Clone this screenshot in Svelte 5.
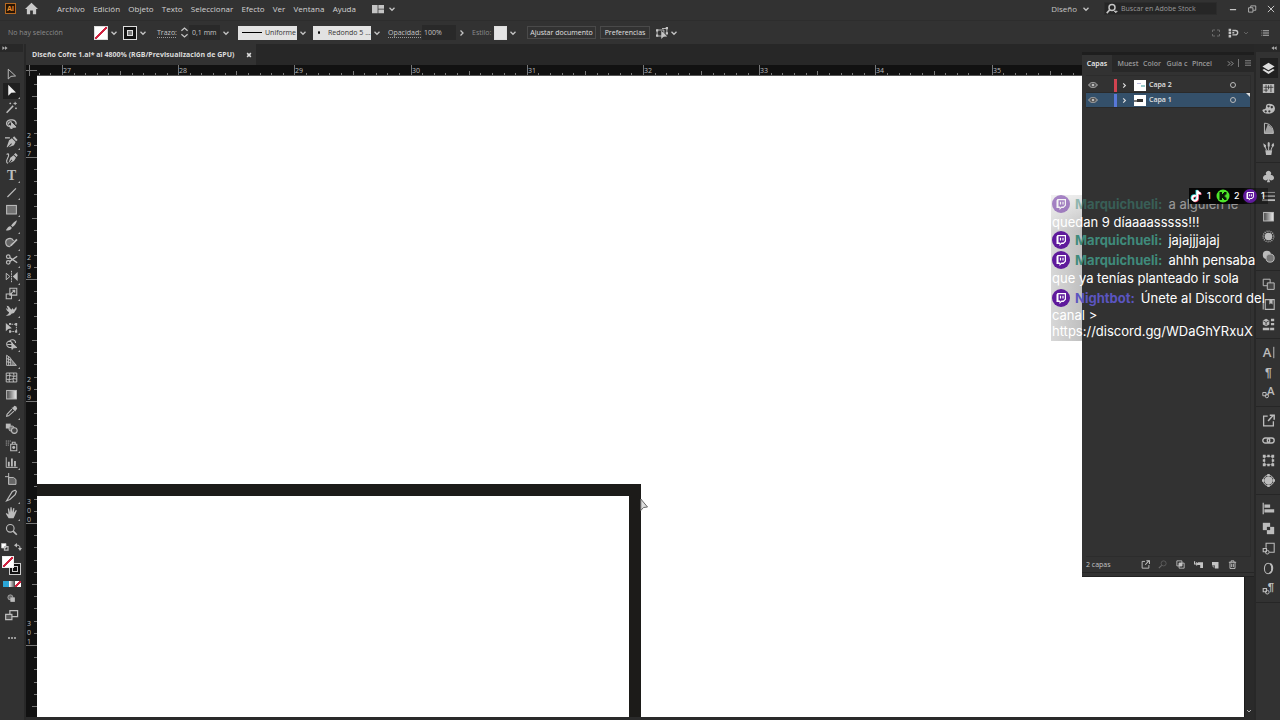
<script lang="ts">
  type Tool = { id: string; label: string; more?: boolean };
  type Layer = { name: string; color: string; thumb: string };
  type Message = { user: string; color: string; lines: string[]; old?: boolean };

  const menus = ["Archivo", "Edición", "Objeto", "Texto", "Seleccionar", "Efecto", "Ver", "Ventana", "Ayuda"];

  const tools: Tool[] = [
    { id: "select", label: "Selección" },
    { id: "direct", label: "Selección directa", more: true },
    { id: "wand", label: "Varita mágica" },
    { id: "lasso", label: "Lazo" },
    { id: "pen", label: "Pluma", more: true },
    { id: "curve", label: "Curvatura" },
    { id: "type", label: "Texto", more: true },
    { id: "line", label: "Segmento de línea", more: true },
    { id: "rect", label: "Rectángulo", more: true },
    { id: "brush", label: "Pincel", more: true },
    { id: "shaper", label: "Shaper", more: true },
    { id: "scissors", label: "Tijeras", more: true },
    { id: "reflect", label: "Reflejo", more: true },
    { id: "scale", label: "Escala", more: true },
    { id: "warp", label: "Deformar", more: true },
    { id: "free", label: "Transformación libre", more: true },
    { id: "builder", label: "Creador de formas", more: true },
    { id: "persp", label: "Cuadrícula de perspectiva", more: true },
    { id: "mesh", label: "Malla" },
    { id: "gradient", label: "Degradado" },
    { id: "dropper", label: "Cuentagotas", more: true },
    { id: "blend", label: "Fusión" },
    { id: "spray", label: "Rociar símbolos", more: true },
    { id: "graph", label: "Gráfica de columnas", more: true },
    { id: "artboard", label: "Mesa de trabajo" },
    { id: "slice", label: "Sector", more: true },
    { id: "hand", label: "Mano", more: true },
    { id: "zoom", label: "Zoom" },
  ];

  const dock = [
    ["layers", "swatches", "palette", "guide", "brushes"],
    ["club", "lines", "gradient", "sun", "transp"],
    ["boards", "library", "assets"],
    ["char", "para", "glyphs"],
    ["export", "link", "transform", "globe"],
    ["align", "pathfinder", "gstyle", "opentype", "pstyle"],
  ];

  const panelTabs = ["Capas", "Muest", "Color", "Guía c", "Pincel"];

  const layers: Layer[] = [
    { name: "Capa 2", color: "#d04350", thumb: "thumb2" },
    { name: "Capa 1", color: "#5878d8", thumb: "thumb1" },
  ];

  const messages: Message[] = [
    { user: "Marquichueli:", color: "#3f8a7b", lines: ["a alguien le", "quedan 9 díaaaasssss!!!"], old: true },
    { user: "Marquichueli:", color: "#3f8a7b", lines: ["jajajjjajaj"] },
    { user: "Marquichueli:", color: "#3f8a7b", lines: ["ahhh pensaba", "que ya tenías planteado ir sola"] },
    { user: "Nightbot:", color: "#5b55c0", lines: ["Únete al Discord del", "canal >", "https://discord.gg/WDaGhYRxuX"] },
  ];

  // regla: una unidad por marca grande, diez divisiones
  let rulerW = $state(0);
  let rulerH = $state(0);
  const ticks = (start: number, step: number, size: number) =>
    Array.from({ length: 200 }, (_, i) => ({ n: i - 8, p: Math.round(start + ((i - 8) * step) / 10) })).filter(
      (t) => t.p > 0 && t.p < size - 11
    );
  const hTicks = $derived(ticks(25, 116.2, rulerW));
  const vTicks = $derived(ticks(81, 122, rulerH + 11));
  const isMajor = (n: number) => n % 10 === 0;
  const isMid = (n: number) => n % 5 === 0;

  let activeTool = $state("direct");
  let activeLayer = $state("Capa 1");
  let weight = $state("0,1 mm");
  let opacity = $state("100%");
  let search = $state("");

  const F = 'fill="currentColor" stroke="none"';
  const icons: Record<string, string> = {
    select: '<path d="M4 1.5v12l3.4-3.2 5.6-.5z"/>',
    direct: `<path ${F} d="M4 1v13.500l3.800-3.700 5.700-.3z"/>`,
    wand: '<path stroke-width="1.800" d="M2 14.500 10 6"/><path d="M12.500 1v4M10.500 3h4M6.500 2v2M5.500 3h2M13.500 8v2M12.500 9h2"/>',
    lasso: '<path stroke-width="1.600" d="M7 10C3.500 11 1.500 8.500 2 6c.7-3 4-4 7-3.600 3 .4 5 2.600 4.600 5.600M5 9.500c2 0 2.500 2 1 3.500M4 8c0-2.500 2-3.500 4-3.500"/><path fill="currentColor" d="M8 5.500v8l2-2 3.500-.3z"/>',
    pen: `<path stroke-width="1.600" d="M0 3.500h6"/><path ${F} d="m2 15 3-8.500L8.500 4l4.500 4.500-2 4L4.500 15l4-4-.8-.8L3 15zM9.500 3.500l1.800-2L15.500 6l-1.800 1.700z"/>`,
    curve: `<path stroke-width="1.400" d="M2 3c3-2 3 1 1.500 4S1 13 3.500 14"/><path ${F} d="m4 14.500 2.500-7.300 4-3.200L13.500 7l-2.500 4-5 2.500L9 10l-.8-.8L4.500 13.500zM11 3l2-1.700L15.700 4 14.300 6z"/>`,
    type: `<text x="8" y="14" text-anchor="middle" font-family="Liberation Serif, serif" font-weight="700" font-size="17" ${F}>T</text>`,
    line: '<path stroke-width="1.500" d="M3 13.500 13.500 3"/>',
    rect: '<rect x="2" y="3" width="12" height="10.500" fill="#727272" stroke-width="1.300"/>',
    brush: `<path ${F} d="M14.800 1.500c-3 1.500-5.500 4-7.300 6.500l1.800 1.700C12 8 14 5 14.800 1.500zM6.500 9c-2.500 0-3 2-5.500 4.800 3 .7 6.500.2 7.400-3z"/>`,
    shaper: `<path stroke-width="1.400" fill="#666" d="M6 13a5 5 0 1 1 4.500-7"/><path ${F} d="M14 3.500 15.500 5 8.500 12 5.500 13.500 7 10.500z"/>`,
    scissors: '<circle cx="4" cy="4.500" r="2.200" stroke-width="1.500"/><circle cx="4" cy="11.500" r="2.200" stroke-width="1.500"/><path stroke-width="1.800" d="M6 5.800 15 12M6 10.300 15 4"/>',
    reflect: `<path d="M1.500 4v8L6 8z"/><path ${F} d="M15.500 2.500v11L9.500 8z"/><path stroke-dasharray="2 1" d="M8 1v14"/>`,
    scale: '<path stroke-width="1.300" d="M6 1.500h8.500V10H6zM1.500 8.500H8v6H1.500zM7 8.500l5-4.500M9 4h3v3"/>',
    warp: `<path ${F} d="M2 2c2 0 3 1 4 3l2 2 1-2 2 2 3-4c0 2 1 3-1 5l-2 3-3 1c-1 2-4 3-7 2 2-1 4-2 4-4C3 9 2 8 1 5l3 2z"/>`,
    free: `<path ${F} d="M1 2.500v10l3-2.800L8.500 9z"/><path stroke-dasharray="2 1" d="M5 4h9v9H5"/><path ${F} d="M12.500 2.500H15v3h-2.500zM12.500 11.500H15v3h-2.500zM5 11.500h2.500v3H5zM5 2.500h2.500v2H5z"/>`,
    builder: '<path stroke-width="1.300" d="M9 11.500c-4 1-7-1-7-4S5 3.500 6 4c1-3 7-2.500 7 2M5 4c3 0 4 2 4 4M3 8h6"/><path fill="currentColor" d="M8.500 6v8l2.200-2 3.800-.3z"/>',
    persp: `<path stroke-width="1.200" d="M2 1.500v12.500h12M2 1.500 7 5v9M4.500 3v11M2 5.500l5 2M2 9.500l5 1M7 6l7 8"/><path ${F} opacity=".6" d="M8 7l6 7H8z"/>`,
    mesh: '<path stroke-width="1.200" d="M1.500 2.500h13v11h-13zM5.500 2.500c2 4-2 7 0 11M10.500 2.500c2 4-2 7 0 11M1.500 6c4-2 9 2 13 0M1.500 10c4 2 9-2 13 0"/>',
    gradient: '<defs><linearGradient id="g"><stop offset="0" stop-color="#444"/><stop offset="1" stop-color="#eee"/></linearGradient></defs><rect x="2" y="3" width="12" height="10.500" fill="url(#g)" stroke-width="1.200"/>',
    dropper: `<path stroke-width="1.300" d="M8.500 5 2.500 11.500 2 14l2.500-.7L11 7.500"/><path ${F} d="M8 3.500 12.500 8l1-1.500L15 4.500 14 1.800 11.500 1 9.800 3z"/>`,
    blend: `<path ${F} d="M1 2h6v6H1z"/><rect x="5" y="5" width="6" height="6" rx="2" fill="#777"/><circle cx="11.500" cy="10.500" r="3.500" fill="#444" stroke-width="1.300"/>`,
    spray: `<path stroke-width="1.300" d="M7 6.500h7.500v8H7zM9 6.500V4h3.500v2.500"/><circle cx="10.700" cy="10.500" r="1.800" ${F}/><path stroke-dasharray="1.200 1.200" d="M1 2.500h7M1 5h5M1 7.500h4"/>`,
    graph: '<path d="M1.500 1.500v12.500h14"/><path stroke-width="2.200" d="M4.700 13V7M8.500 13V3M12.300 13V6"/>',
    artboard: '<path stroke-width="1.200" d="M4.500 0v14M0 4.500h5"/><path fill="#666" stroke-width="1.200" d="M4.500 5.500h6l3 2.500v6h-9z"/>',
    slice: '<path stroke-width="1.500" d="M2 14.500 9 3l3.500-1.500L14 3l-1.500 4L6 13z"/>',
    hand: `<path ${F} d="M4.500 15 1 9.500l1-1 2.300 2L3.500 3.300l1.300-.4 1.400 5L6.700 1.500h1.500l.5 6 1.500-5 1.400.3-.7 5.600 2.500-3.600 1.200.8-2.500 6L10.500 15z"/>`,
    zoom: '<circle cx="6.500" cy="6.500" r="4.700" stroke-width="1.400"/><path stroke-width="2" d="m10 10 4.500 4.500"/>',
    layers: `<path ${F} d="M8 1 15.500 5.500 8 10 .5 5.500z"/><path ${F} d="m2.500 8.500 5.500 3.300 5.500-3.300 2 1.300L8 14.800.5 9.800z"/>`,
    swatches: `<rect x="1" y="2.500" width="14" height="11" ${F}/><path stroke="#333" stroke-width="1" d="M5 3.500v9M11 3.500v9M2 6.500h12M2 10h5M8 4v5"/>`,
    palette: `<path ${F} fill-rule="evenodd" d="M9 2c4 0 7 2.500 7 6 0 4-4 6.500-8 6.500S1 13 .5 10.500c0-2 3-1 4-2.500S3.500 2 9 2zM8 4a1.300 1.300 0 1 0 .1 0zM12 5a1.300 1.300 0 1 0 .1 0zM4.500 10a1.400 1.400 0 1 0 .1 0zM9 10a1.400 1.400 0 1 0 .1 0z"/>`,
    guide: `<path d="M3 1.500v12.500h11C14 6 9 1.500 3 1.500z"/><path ${F} opacity=".8" d="M7 3c4 2 7 6 7 11H3z"/>`,
    brushes: `<path ${F} d="M4 10h8.500l-1 6H5z"/><path stroke-width="1.200" d="M8.200 10V5M5.500 10 3.500 5M11 10l2-5"/><path ${F} d="M1.500 1.500 5 4l-.5 2.500H2.500zM7 5.500V1l1.200-1L9.500 1v4.500zM11.500 4 14 1l1 3-1.500 2.500z"/>`,
    club: `<path ${F} d="M8 1a3.300 3.300 0 0 1 2.600 5.300 3.300 3.300 0 1 1-1.800 5.200L10 15H6l1.200-3.500a3.300 3.300 0 1 1-1.800-5.200A3.300 3.300 0 0 1 8 1z"/>`,
    lines: '<path stroke-width=".8" d="M0 3h16"/><path stroke-width="1.400" d="M0 7.500h16"/><path stroke-width="2.200" d="M0 12.500h16"/>',
    sun: `<circle cx="8" cy="8" r="4.700" ${F}/><circle cx="8" cy="8" r="6.500" stroke-dasharray="1 1.500" stroke-width="1.800"/>`,
    transp: `<circle cx="6" cy="6" r="5" ${F}/><circle cx="10" cy="10" r="5" fill="#777"/>`,
    boards: '<path d="M1.500 1.500h8.500v8H1.500z"/><path fill="#444" d="M6.500 6h8.500v8H6.500z"/>',
    library: `<path stroke-width="1.300" d="M4 2h11v12H4zM1.500 4v10"/><path ${F} d="M9 2h4v6l-2-1.500L9 8z"/>`,
    assets: `<path ${F} d="M5 1 9 3v5L5 10 1 8V3zM11 1h4v3h-4zM11 6h4v3h-4zM1 12h8v3H1zM10 12h5v3h-5z"/><path stroke="#444" d="m1.500 3.500 3.500 2 3.500-2M5 5.500V9"/>`,
    char: `<text x="1" y="14" font-family="Open Sans, sans-serif" font-size="16" font-weight="600" ${F}>A</text><path d="M14.500 1v14"/>`,
    para: `<text x="8" y="13" text-anchor="middle" font-family="Liberation Sans, sans-serif" font-weight="700" font-size="15" ${F}>¶</text>`,
    glyphs: `<text x="6" y="11" font-family="Open Sans, sans-serif" font-weight="600" font-size="14" ${F}>A</text><path stroke-width="1.200" d="M1 8h4v4H1z"/><circle cx="6" cy="12.500" r="2"/>`,
    export: '<path stroke-width="1.600" d="M7 2.500H2v12h12V9"/><path stroke-width="1.800" d="m7.500 8.500 6-6.500M9.500 1.500H15V7"/>',
    link: '<rect x="1" y="5" width="8.500" height="6" rx="3" stroke-width="1.700"/><rect x="6.500" y="5" width="8.500" height="6" rx="3" stroke-width="1.700"/>',
    transform: `<path stroke-dasharray="1.500 1" d="M3 3h10v10H3z"/><path ${F} d="M1 1h3.500v3.500H1zM11.500 1H15v3.500h-3.500zM1 11.500h3.500V15H1zM11.500 11.500H15V15h-3.500zM6.500 1h3v3h-3zM6.500 12h3v3h-3zM1 6.500h3v3H1zM12 6.500h3v3h-3z"/>`,
    globe: `<circle cx="8" cy="8" r="5" ${F}/><circle cx="8" cy="8" r="6.500"/><path ${F} d="M6.500 0h3v3h-3zM6.500 13h3v3h-3zM0 6.500h3v3H0zM13 6.500h3v3h-3z"/>`,
    align: `<path stroke-width="1.500" d="M1.500 1v14"/><path ${F} d="M3 3h7v4H3zM3 9h12v4H3z"/>`,
    pathfinder: `<path ${F} d="M1 1h9v9H1z"/><path ${F} d="M6 6h9v9H6z"/><path fill="#333" stroke="none" d="M6 6h4v4H6z"/>`,
    gstyle: '<path stroke-width="1.300" d="M5 7V1.500h10v11H9"/><path stroke-width="1.400" d="M1.500 8h4v4h-4z"/><circle cx="6.500" cy="12.500" r="2.300"/>',
    opentype: '<ellipse cx="7.500" cy="8" rx="4.500" ry="6.500" stroke-width="1.300"/><path stroke-width="1.800" d="M10 2c4 2 4 10-1 12"/>',
    pstyle: `<text x="11" y="11" text-anchor="middle" font-family="Liberation Sans, sans-serif" font-weight="700" font-size="14" ${F}>¶</text><path stroke-width="1.400" d="M1.500 8h4v4h-4z"/><circle cx="6.500" cy="12.500" r="2.300"/>`,
    chev: '<path stroke-width="2.600" d="m3 5.500 5 5 5-5"/>',
    chevr: '<path stroke-width="2.600" d="m5 3 5 5-5 5"/>',
    home: `<path ${F} d="M8 1 0 8.500h2.300V15h4v-4.500h3.400V15h4V8.500H16z"/>`,
    workspace: `<path ${F} d="M0 2.500h7.500v11H0zM8.500 2.500H16v5H8.500zM8.500 8.500H16v5H8.500z"/>`,
    search: '<circle cx="8" cy="6" r="4" stroke-width="2"/><path stroke-width="2.200" d="m5 9-4 4.500"/><path fill="currentColor" d="M11 11h4l-2 2z"/>',
    min: '<path stroke-width="2" d="M3 9h10"/>',
    max: '<path stroke-width="1.300" d="M2.500 6h7v7h-7zM6 6V3h8v7h-4"/>',
    close: '<path stroke-width="1.600" d="m3 3 10 10M13 3 3 13"/>',
    closeb: '<path stroke-width="4" d="m3 3 10 10M13 3 3 13"/>',
    bars: '<path stroke-width="1.600" d="M2 3.500h12M2 8h12M2 12.500h12"/>',
    list: '<path stroke-width="1.800" d="M4 3.500h12M4 8h12M4 12.500h12M1 3.500h1.500M1 8h1.500M1 12.500h1.500"/>',
    dots: '<path stroke-width="2" d="M1 6V2h5M10 2h5v4M15 10v4h-5M6 14H1v-4"/>',
    snap: '<path stroke-width="4" stroke-dasharray="4 1" d="M3 1v15"/><path stroke-width="2.200" d="M7 4h5a3 3 0 0 1 0 7H7M7 7.500h3"/>',
    pick: `<path d="M1.500 4h9v8h-9z"/><path d="M8 2h6.500v6"/><path ${F} d="M7 5v11l3-3 5-.5zM0 3h3v3H0zM13 0h3v3h-3zM0 10h3v3H0zM13 7h3v3h-3z"/>`,
    dbl: '<path stroke-width="2.200" d="m2 3 5 5-5 5M9 3l5 5-5 5"/>',
    dblLeft: `<path ${F} d="M8 3v10L1 8zM15 3v10L8 8z"/>`,
    dblRight: `<path ${F} d="M1 3v10l7-5zM8 3v10l7-5z"/>`,
    eye: '<path fill="#666" stroke-width="1.600" d="M1 8c3-5.500 11-5.500 14 0-3 5.500-11 5.500-14 0z"/><circle cx="8" cy="8" r="3" fill="#bbb" stroke="#333"/>',
    stepper: '<path stroke-width="1.800" d="m3.500 5.500 4.500-4 4.500 4M3.500 10.500l4.500 4 4.500-4"/>',
    find: '<circle cx="10" cy="6" r="4.500"/><path stroke-width="2" d="m6.500 9.500-5 5"/>',
    mask: `<path stroke-width="1.500" d="M1.500 1.500h9v9h-9zM5.500 5.500h9v9h-9z"/><path ${F} d="M5 5h6v6H5z"/>`,
    sublayer: `<path stroke-width="2" d="M1 2v5h6M4 4.500 7 7 4 9.500"/><path ${F} d="M7 4h9v10h-5V9H7z"/>`,
    newlayer: `<path ${F} d="M2 2h13v13H8V9H2z"/><path ${F} opacity=".6" d="M2 10h5v5z"/>`,
    trash: '<path stroke-width="1.600" d="M1.500 4h13M5.500 4V1.500h5V4M3.500 4v11h9V4M6.500 6.500v6M9.500 6.500v6"/>',
    screen: '<path stroke-width="1.500" d="M6 2h9.500v7.500H6z"/><path stroke-width="1.500" fill="#555" d="M.8 6.500h7.700V13H.8z"/>',
    draw: `<circle cx="6" cy="6" r="4.500" fill="#666"/><path ${F} d="M6 6h8v8H6z"/>`,
    swap: `<path stroke-width="2" d="M5 4.500c5-1 7 1.500 7 6"/><path ${F} d="M6 0v9L0 4.500zM8 10h8l-4 6z"/>`,
    defaults: '<path fill="#fff" stroke-width="1.500" d="M1 1h9v9H1z"/><path stroke-width="2.500" d="M7 7h7v7H7z"/>',
  };
</script>

{#snippet icon(id: string, size = 14)}
  <svg
    class="icon"
    width={size}
    height={size}
    viewBox="0 0 16 16"
    fill="none"
    stroke="currentColor"
    stroke-width="1.200"
    aria-hidden="true">{@html icons[id]}</svg>
{/snippet}

{#snippet chevron(label: string, id = "chev")}
  <button class="chev" aria-label={label}>{@render icon(id, 8)}</button>
{/snippet}

{#snippet twitch(size: number)}
  <svg class="twitch" width={size} height={size} viewBox="0 0 18 18" aria-hidden="true">
    <circle cx="9" cy="9" r="9" fill="#5f1a9c" />
    <path fill="#fff" d="M5.500 4h8.500v6.500L11.500 13H9.500l-2 2v-2H4.500V5.500z" />
    <path fill="#5f1a9c" d="M6.500 5.300h6.300v4.600l-1.500 1.600H9.500l-1.300 1.300v-1.300H6.500z" />
    <path stroke="#fff" stroke-width="1.200" d="M8.500 6.800v2.700M11 6.800v2.700" />
  </svg>
{/snippet}

<div class="app">
  <header class="menubar">
    <span class="logo">Ai</span>
    <button class="home" aria-label="Inicio">{@render icon("home", 13)}</button>
    <nav class="menus">
      {#each menus as m (m)}
        <button>{m}</button>
      {/each}
    </nav>
    <button class="work" aria-label="Organizar documentos">{@render icon("workspace", 12)}</button>
    {@render chevron("Más disposiciones")}
    <div class="spacer"></div>
    <button class="design">Diseño {@render icon("chev", 8)}</button>
    <label class="search">
      {@render icon("search", 12)}
      <input type="search" aria-label="Buscar" placeholder="Buscar en Adobe Stock" bind:value={search} />
    </label>
    <div class="window">
      <button aria-label="Minimizar">{@render icon("min", 10)}</button>
      <button aria-label="Restaurar">{@render icon("max", 10)}</button>
      <button aria-label="Cerrar">{@render icon("close", 10)}</button>
    </div>
  </header>

  <section class="control">
    <span class="status">No hay selección</span>
    <button class="fill none" aria-label="Relleno"></button>
    {@render chevron("Opciones de relleno")}
    <button class="fill ring" aria-label="Color de trazo"><i></i></button>
    {@render chevron("Opciones de trazo")}
    <label class="lbl weight" for="weight">Trazo:</label>
    <button class="step" aria-label="Cambiar grosor">{@render icon("stepper", 11)}</button>
    <input id="weight" class="num w31" bind:value={weight} />
    {@render chevron("Grosores")}
    <label class="pick profile">
      <i class="stroke"></i>
      <select aria-label="Perfil"><option>Uniforme</option></select>
    </label>
    {@render chevron("Perfiles")}
    <label class="pick brush">
      <i class="dot"></i>
      <select aria-label="Pincel"><option>Redondo 5 ...</option></select>
    </label>
    {@render chevron("Pinceles")}
    <label class="lbl opac" for="opacity">Opacidad:</label>
    <input id="opacity" class="num w34" bind:value={opacity} />
    {@render chevron("Más opacidad", "chevr")}
    <span class="estilo">Estilo:</span>
    <button class="fill plain" aria-label="Estilo gráfico"></button>
    {@render chevron("Estilos")}
    <button class="boxed fit">Ajustar documento</button>
    <button class="boxed prefs">Preferencias</button>
    <button class="similar" aria-label="Seleccionar similares">{@render icon("pick", 12)}</button>
    {@render chevron("Más opciones de selección")}
    <div class="spacer"></div>
    <div class="tail">
      <span class="dim">{@render icon("dots", 8)}</span>
      <button aria-label="Ajustar">{@render icon("snap", 10)}</button>
      <span class="dim">{@render icon("chev", 6)}</span>
      <button class="opts" aria-label="Opciones">{@render icon("list", 8)}</button>
    </div>
  </section>

  <main class="body">
    <aside class="toolbox">
      <div class="strip">{@render icon("dblRight", 6)}</div>
      <div class="tools">
        {#each tools as t (t.id)}
          <button
            class="tool"
            class:active={activeTool === t.id}
            class:more={t.more}
            aria-label={t.label}
            onclick={() => (activeTool = t.id)}
          >
            {@render icon(t.id, 13)}
          </button>
        {/each}
      </div>
      <div class="pair">
        <button aria-label="Relleno y trazo por defecto">{@render icon("defaults", 8)}</button>
        <button aria-label="Intercambiar">{@render icon("swap", 8)}</button>
      </div>
      <div class="colors">
        <button class="back" aria-label="Trazo"></button>
        <button class="front none" aria-label="Relleno"></button>
      </div>
      <div class="modes">
        <button class="solid" aria-label="Color"></button>
        <button class="grad" aria-label="Degradado"></button>
        <button class="none" aria-label="Ninguno"></button>
      </div>
      <button class="extra" aria-label="Modo de dibujo">{@render icon("draw", 9)}</button>
      <button class="extra" aria-label="Modo de pantalla">{@render icon("screen", 13)}</button>
      <button class="extra edit" aria-label="Editar barra"><i></i><i></i><i></i></button>
    </aside>

    <section class="doc">
      <div class="tabs">
        <div class="tab">
          <span>Diseño Cofre 1.ai* al 4800% (RGB/Previsualización de GPU)</span>
          <button aria-label="Cerrar documento">{@render icon("closeb", 6)}</button>
        </div>
      </div>
      <div class="corner"></div>
      <div class="hruler" bind:clientWidth={rulerW}>
        <svg width="100%" height="11">
          {#each hTicks as t (t.n)}
            <path d={`M${t.p}.5 ${isMajor(t.n) ? 0 : isMid(t.n) ? 6 : 8}V11`} />
            {#if isMajor(t.n)}
              <text x={t.p + 1} y="8">{27 + t.n / 10}</text>
            {/if}
          {/each}
        </svg>
      </div>
      <div class="vruler" bind:clientHeight={rulerH}>
        <svg width="11" height="100%">
          {#each vTicks as t (t.n)}
            <path d={`M${isMajor(t.n) ? 0 : isMid(t.n) ? 6 : 8} ${t.p}.5H11`} />
            {#if isMajor(t.n)}
              {#each String(297 + t.n / 10) as d, i}
                <text x="1" y={t.p - 19 + i * 9}>{d}</text>
              {/each}
            {/if}
          {/each}
        </svg>
      </div>
      <div class="canvas">
        <div class="shape"></div>
        <svg class="cursor" width="8" height="14" viewBox="0 0 8 14" aria-hidden="true">
          <path d="M.8 1v11.500L3.500 9.500 7.500 9z" fill="#ddd" stroke="#666" />
        </svg>
      </div>
      <div class="scroll">{@render icon("chev", 6)}</div>
    </section>

    <aside class="dock">
      <div class="strip">{@render icon("dblLeft", 6)}</div>
      {#each dock as group, i (i)}
        <div class="group">
          {#each group as id (id)}
            <button class:on={id === "layers"} aria-label={id}>{@render icon(id, 13)}</button>
          {/each}
        </div>
      {/each}
    </aside>

    <section class="panel">
      <div class="ptabs">
        {#each panelTabs as p, i (p)}
          <button class:on={i === 0}>{p}</button>
        {/each}
        <span class="pmore">{@render icon("dbl", 7)}</span>
        <button class="pmenu" aria-label="Menú del panel">{@render icon("bars", 8)}</button>
      </div>
      <ul class="layers">
        {#each layers as l (l.name)}
          <li class:sel={activeLayer === l.name}>
            <button class="eye" aria-label="Visibilidad">{@render icon("eye", 10)}</button>
            <i class="tint" style:background={l.color}></i>
            <button class="open" aria-label="Desplegar">{@render icon("chevr", 7)}</button>
            <span class="thumb {l.thumb}"></span>
            <button class="name" onclick={() => (activeLayer = l.name)}>{l.name}</button>
            <button class="target" aria-label="Destino"><i></i></button>
          </li>
        {/each}
      </ul>
      <footer class="pfoot">
        <span class="count">2 capas</span>
        <button aria-label="Exportar">{@render icon("export", 9)}</button>
        <button class="dim" aria-label="Localizar">{@render icon("find", 9)}</button>
        <button aria-label="Máscara">{@render icon("mask", 9)}</button>
        <button aria-label="Nueva subcapa">{@render icon("sublayer", 9)}</button>
        <button aria-label="Nueva capa">{@render icon("newlayer", 8)}</button>
        <button aria-label="Eliminar">{@render icon("trash", 9)}</button>
      </footer>
    </section>
  </main>

  <!-- chat del directo, superpuesto a toda la ventana -->
  <div class="chat">
    {#each messages as m}
      <div class="msg" class:old={m.old}>
        <div class="first">
          {@render twitch(18)}<b style:color={m.color}>{m.user}</b><span>{m.lines[0]}</span>
        </div>
        {#each m.lines.slice(1) as l}
          <div class="next">{l}</div>
        {/each}
      </div>
    {/each}
  </div>

  <div class="viewers">
    <svg width="14" height="14" viewBox="0 0 14 14" aria-hidden="true">
      <g fill="none" stroke-width="2">
        <path stroke="#25d8d8" d="M6 6.500a2.500 2.500 0 1 0 1.500 2.500V1c.3 2 1.500 3 3.500 3" />
        <path stroke="#f03a5f" d="M7.500 7.500A2.500 2.500 0 1 0 9 10V2c.3 2 1.500 3 3.500 3" />
        <path stroke="#fff" d="M6.800 7a2.500 2.500 0 1 0 1.500 2.500V1.500c.3 2 1.500 3 3.500 3" />
      </g>
    </svg>
    <span>1</span>
    <svg width="14" height="14" viewBox="0 0 14 14" aria-hidden="true">
      <circle cx="7" cy="7" r="6.500" fill="#4de62a" />
      <path fill="#071805" d="M3.500 3h2.500v2h1V4h1V3h2.500v2.500h-1v1h-1v1h1v1h1V11H8v-1H7V9H6v2H3.500z" />
    </svg>
    <span>2</span>
    {@render twitch(14)}
    <span>1</span>
  </div>
</div>

<style>
  :global(body) { background: #323232; }
  .app {
    position: relative;
    min-height: 100vh;
    display: flex;
    flex-direction: column;
    overflow: hidden;
    background: #323232;
    color: #c4c4c4;
    font: 8px/12px "Open Sans", "Noto Sans", sans-serif;
  }
  .app *, .app *::before, .app *::after { box-sizing: border-box; }
  button, input, select {
    margin: 0;
    padding: 0;
    border: 0;
    border-radius: 0;
    background: none;
    color: inherit;
    font: inherit;
    outline: none;
    appearance: none;
  }
  button {
    display: inline-flex;
    align-items: center;
    justify-content: center;
    flex: none;
    white-space: nowrap;
  }
  .icon { display: block; flex: none; overflow: visible; }
  .spacer { flex: 1; }
  .dim { color: #6a6a6a; }
  .chev { width: 12px; height: 14px; }

  /* barra de menús */
  .menubar {
    display: flex;
    align-items: center;
    height: 20px;
    padding: 0 4px 3px 5px;
  }
  .logo {
    width: 11px;
    height: 11px;
    border: 1px solid #b56a24;
    background: #2a1504;
    color: #f0902c;
    font-size: 7px;
    font-weight: 700;
    line-height: 9px;
    text-align: center;
  }
  .home { width: 30px; color: #c8c8c8; }
  .menus {
    display: flex;
    justify-content: space-between;
    width: 299px;
    margin-left: 11px;
    color: #d2d2d2;
  }
  .work { margin-left: 16px; width: 12px; }
  .work + .chev { margin-left: 2px; }
  .design { gap: 5px; margin-right: 14px; }
  .search {
    display: flex;
    align-items: center;
    gap: 3px;
    width: 113px;
    height: 13px;
    padding-left: 1px;
    border: 1px solid #2c2c2c;
    background: #262626;
  }
  .search input { width: 94px; height: 11px; font-size: 7px; }
  .search input::placeholder { color: #9a9a9a; opacity: 1; }
  .window { display: flex; gap: 8px; margin-left: 10px; }
  .window button { width: 11px; }

  /* barra de control */
  .control {
    display: flex;
    align-items: center;
    height: 24px;
    padding-left: 8px;
    border-top: 1px solid #2d2d2d;
  }
  .status { width: 86px; color: #8c8c8c; font-size: 7px; }
  .fill { width: 14px; height: 14px; border: 1px solid #ddd; }
  .none { background: linear-gradient(to bottom right, #fff 44%, #d02340 45% 55%, #fff 56%); }
  .ring { margin-left: 3px; background: #111; }
  .ring i { width: 6px; height: 6px; border: 1px solid #ddd; background: #777; }
  .plain { width: 13px; background: #e4e4e4; }
  .lbl { text-decoration: underline dotted #999; text-underline-offset: 2px; font-size: 7px; }
  .weight { width: 22px; margin-left: 8px; }
  .step { width: 10px; }
  .num { height: 15px; padding: 0 3px; background: #292929; font-size: 7px; }
  .w31 { width: 31px; }
  .w34 { width: 34px; padding: 0 2px; }
  .pick {
    display: flex;
    align-items: center;
    height: 14px;
    background: #e2e2e2;
    color: #333;
  }
  .pick select { height: 12px; font-size: 7px; }
  .profile { width: 59px; gap: 3px; margin-left: 6px; padding-left: 4px; }
  .stroke { width: 22px; height: 1px; background: #000; }
  .brush { width: 58px; gap: 8px; margin-left: 4px; padding-left: 5px; }
  .dot { width: 3px; height: 3px; border-radius: 50%; background: #000; }
  .opac { width: 34px; margin-left: 5px; }
  .estilo { width: 22px; margin-left: 4px; color: #8c8c8c; font-size: 7px; }
  .boxed {
    height: 13px;
    border: 1px solid #4a4a4a;
    font-size: 7px;
    font-weight: 500;
    color: #e0e0e0;
  }
  .fit { width: 69px; margin-left: 8px; }
  .prefs { width: 50px; margin-left: 4px; }
  .similar { margin-left: 6px; }
  .tail { display: flex; align-items: center; gap: 12px; padding-right: 11px; }
  .tail > :nth-child(3) { margin-left: -7px; }
  .tail > :first-child { margin: 0 -4px 0 0; }

  .body {
    position: relative;
    flex: 1;
    display: grid;
    grid-template-columns: 26px 1fr 26px;
  }
  .strip {
    display: flex;
    align-items: center;
    height: 8px;
    background: #282828;
    color: #aaa;
  }

  /* herramientas */
  .toolbox {
    display: flex;
    flex-direction: column;
    align-items: center;
    padding-right: 1px;
    border-right: 2px solid #282828;
    color: #bcbcbc;
  }
  .toolbox .strip { align-self: stretch; padding-left: 2px; }
  .tools {
    display: flex;
    flex-direction: column;
    justify-content: space-between;
    height: 472px;
    margin-top: 14px;
  }
  .tool { position: relative; width: 17px; height: 16px; }
  .tool.active { background: #202020; color: #eee; }
  .tool.more::after {
    content: "";
    position: absolute;
    right: 0;
    bottom: 0;
    border: 1px solid #aaa;
    border-top-color: transparent;
    border-left-color: transparent;
  }
  .pair { display: flex; gap: 5px; margin-top: 5px; }
  .colors {
    display: grid;
    grid-template: 7px 12px / 7px 12px;
    width: 19px;
    margin-top: 5px;
  }
  .back {
    grid-area: 2 / 2;
    width: 12px;
    height: 12px;
    border: 1px solid #ccc;
    background: #111;
    box-shadow: inset 0 0 0 2px #111, inset 0 0 0 3px #ccc;
  }
  .front { grid-area: 1 / 1; width: 12px; height: 12px; border: 1px solid #eee; z-index: 1; }
  .modes { display: flex; margin-top: 6px; }
  .modes button { width: 6px; height: 6px; }
  .solid { background: #2ba5d6; }
  .grad { background: linear-gradient(90deg, #fff, #444); }
  .modes .none { background: linear-gradient(to bottom right, #fff 35%, #d02340 36% 64%, #fff 65%); }
  .extra { height: 17px; }
  .modes + .extra { margin-top: 3px; }
  .edit { gap: 1px; margin-top: 5px; }
  .edit i { width: 2px; height: 2px; border-radius: 50%; background: #bbb; }

  /* documento */
  .doc {
    display: grid;
    grid-template: 21px 11px 1fr / 11px 1fr 10px;
    padding-bottom: 3px;
    background: #2a2a2a;
  }
  .tabs { grid-column: 1 / -1; background: #272727; }
  .tab {
    display: inline-flex;
    align-items: center;
    gap: 12px;
    height: 21px;
    padding: 0 4px 0 6px;
    background: #323232;
    color: #dcdcdc;
    font-size: 7px;
    font-weight: 700;
    white-space: nowrap;
  }
  .corner {
    background: linear-gradient(#777, #777) 3px 0 / 1px 100% no-repeat,
      linear-gradient(#777, #777) 0 5px / 100% 1px no-repeat, #111;
  }
  .hruler {
    grid-column: 2 / -1;
    border-bottom: 1px solid #555;
    background: #111;
    overflow: hidden;
  }
  .hruler svg, .vruler svg { display: block; }
  .hruler path, .vruler path { stroke: #777; }
  .hruler text, .vruler text { fill: #bbb; font-size: 7px; }
  .vruler { background: #111; overflow: hidden; height: 0; min-height: 100%; }
  .canvas { position: relative; background: #fff; overflow: hidden; }
  .shape {
    position: absolute;
    top: 408px;
    left: 0;
    bottom: 0;
    width: 604px;
    border: solid #1c1b19;
    border-width: 12px 12px 0 0;
  }
  .cursor { position: absolute; left: 603px; top: 422px; }
  .scroll {
    display: flex;
    flex-direction: column;
    justify-content: flex-end;
    padding: 0 0 3px 1px;
    border-left: 1px solid #1c1c1c;
  }

  /* paneles plegados */
  .dock { border-left: 2px solid #282828; color: #bcbcbc; }
  .dock .strip { justify-content: flex-end; padding-right: 3px; }
  .group {
    display: flex;
    flex-direction: column;
    align-items: center;
    padding: 3px 0 4px 1px;
    border-bottom: 1px solid #262626;
  }
  .strip + .group { padding-top: 6px; }
  .group button { width: 18px; height: 20px; }
  .group button.on { background: #202020; color: #ddd; }

  /* panel de capas */
  .panel {
    position: absolute;
    top: 8px;
    right: 26px;
    width: 172px;
    height: 525px;
    display: flex;
    flex-direction: column;
    padding-bottom: 3px;
    border-top: 3px solid #1e1e1e;
    border-bottom: 1px solid #222;
    background: #323232;
  }
  .ptabs {
    display: flex;
    height: 17px;
    background: #282828;
    color: #9a9a9a;
    font-size: 7px;
    font-weight: 600;
  }
  .ptabs button { width: 24px; }
  .ptabs button:nth-child(4) { width: 26px; }
  .ptabs button.on { width: 30px; margin-right: 4px; background: #323232; color: #eee; }
  .pmore { display: flex; align-items: center; margin-left: 13px; }
  .ptabs .pmenu { width: 10px; height: 8px; margin: 4px 0 0 4px; border-left: 1px solid #777; padding-left: 8px; }
  .layers {
    flex: 1;
    margin: 3px 3px 0 4px;
    padding: 2px 0 0;
    border: 1px solid #2c2c2c;
    border-width: 1px 1px 1px 0;
    list-style: none;
  }
  .layers li {
    position: relative;
    display: flex;
    align-items: center;
    height: 15px;
    border-bottom: 1px solid #2a2a2a;
    color: #e0e0e0;
  }
  .layers li.sel { background: #34506a; }
  .sel::after {
    content: "";
    position: absolute;
    top: 0;
    right: 0;
    border: 2px solid #ddd;
    border-left-color: transparent;
    border-bottom-color: transparent;
  }
  .eye { width: 13px; color: #a8a8a8; }
  .tint { width: 3px; height: 13px; margin-left: 15px; }
  .open { width: 14px; }
  .thumb { width: 12px; height: 11px; margin: 0 3px; background: #fff; }
  .thumb2 {
    background: linear-gradient(#9cc, #9cc) 7px 5px / 4px 2px no-repeat,
      linear-gradient(#bbd, #bbd) 3px 3px / 4px 1px no-repeat, #fff;
  }
  .thumb1 {
    background: linear-gradient(#333, #333) 3px 4px / 6px 3px no-repeat,
      linear-gradient(#777, #777) 0 5px / 3px 2px no-repeat, #fff;
  }
  .name { flex: 1; justify-content: flex-start; font-size: 7px; font-weight: 600; }
  .target { width: 34px; }
  .target i { width: 6px; height: 6px; border: 1px solid #bbb; border-radius: 50%; }
  .pfoot {
    display: flex;
    align-items: center;
    justify-content: space-between;
    height: 16px;
    padding: 0 17px 0 4px;
    border-bottom: 1px solid #262626;
  }
  .count { width: 46px; font-size: 7px; }
  .pfoot .dim { color: #6a6a6a; }

  /* chat */
  .chat {
    position: absolute;
    top: 195px;
    left: 1051px;
    color: #fff;
    font: 400 13px/18px Inter, "Open Sans", sans-serif;
    white-space: nowrap;
  }
  .msg {
    width: 200px;
    padding: 0 0 2px 1px;
    background: linear-gradient(90deg, #8885, #7777 31px, #0000 31px);
  }
  .msg.old {
    padding: 0 0 0 1px;
    background: linear-gradient(#fffa, #fff0) 0 0 / 31px 100% no-repeat,
      linear-gradient(90deg, #8885, #7777 31px, #0000 31px);
  }
  .msg:last-child .next { line-height: 16px; }
  .msg.old .first { opacity: 0.5; }
  .first { display: flex; align-items: center; }
  .first b { margin: 0 6px 0 5px; font-weight: 700; }
  .twitch { flex: none; }
  .viewers {
    position: absolute;
    top: 188px;
    left: 1189px;
    display: flex;
    align-items: center;
    gap: 4px;
    height: 16px;
    padding: 0 2px 0 0;
    background: linear-gradient(90deg, #060606 54px, #0006 66px);
    color: #fff;
    font: 500 9px/16px Inter, "Open Sans", sans-serif;
  }
  .viewers span { width: 5px; }
</style>
